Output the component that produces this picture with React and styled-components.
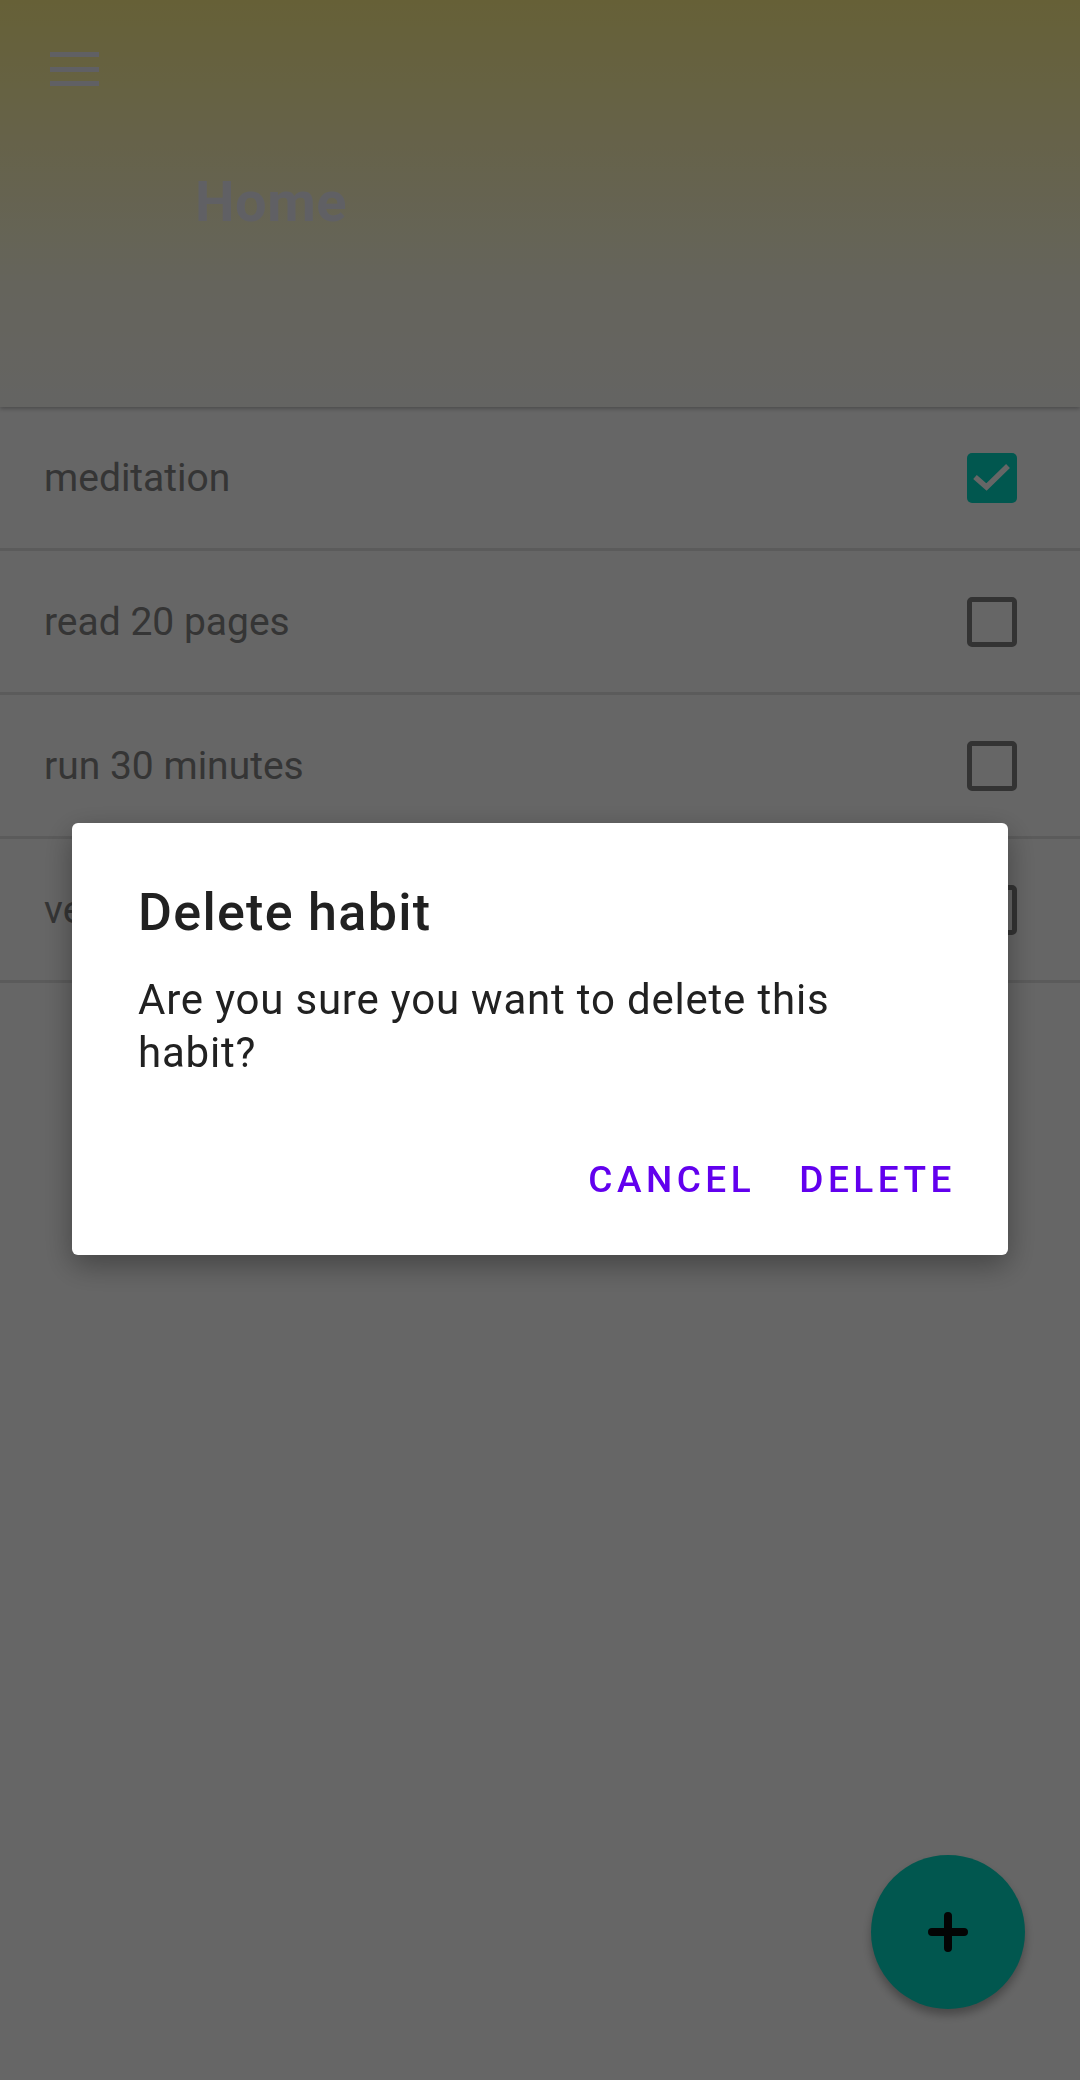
import React from "react";
import styled, { createGlobalStyle } from "styled-components";

const GlobalStyle = createGlobalStyle`
  html, body {
    margin: 0;
    padding: 0;
    background: #ffffff;
    font-family: Roboto, "Liberation Sans", sans-serif;
  }
`;

const Screen = styled.div`
  position: relative;
  min-height: 100vh;
  background: #ffffff;
  overflow: hidden;
`;

const Header = styled.header`
  height: 407px;
  box-sizing: border-box;
  padding: 52px 0 0 50px;
  background: linear-gradient(180deg, #fff18a 0%, #fdfbe6 70%, #fbfbf6 100%);
  box-shadow: 0 2px 4px rgba(0, 0, 0, 0.25);
  position: relative;
  z-index: 1;
`;

const MenuButton = styled.div`
  width: 49px;
  display: flex;
  flex-direction: column;
  gap: 9.5px;

  span {
    display: block;
    height: 5px;
    background: #eff1fa;
  }
`;

const Title = styled.h1`
  margin: 88px 0 0 145px;
  font-size: 56px;
  font-weight: 700;
  line-height: 1;
  color: #eff1fa;
  letter-spacing: 0.5px;
`;

const List = styled.div`
  display: flex;
  flex-direction: column;
`;

const Row = styled.div`
  height: 141px;
  display: flex;
  align-items: center;
  justify-content: space-between;
  padding: 0 63px 0 44px;
  border-bottom: 3px solid #e4e4e4;
`;

const RowLabel = styled.span`
  font-size: 39px;
  color: #848484;
`;

const Box = styled.div`
  width: 50px;
  height: 50px;
  box-sizing: border-box;
  border-radius: 5px;
  display: flex;
  align-items: center;
  justify-content: center;
  background: ${(p) => (p.checked ? "#03dac5" : "transparent")};
  border: ${(p) => (p.checked ? "none" : "5.5px solid #808080")};
`;

const Fab = styled.div`
  position: absolute;
  right: 55px;
  bottom: 71px;
  width: 154px;
  height: 154px;
  border-radius: 50%;
  background: #03dac5;
  display: flex;
  align-items: center;
  justify-content: center;
  box-shadow: 0 6px 10px rgba(0, 0, 0, 0.3);
`;

const Scrim = styled.div`
  position: fixed;
  inset: 0;
  background: rgba(0, 0, 0, 0.6);
  display: flex;
  align-items: center;
  justify-content: center;
  z-index: 5;
`;

const Dialog = styled.div`
  width: 936px;
  box-sizing: border-box;
  margin-top: -3px;
  background: #ffffff;
  border-radius: 6px;
  box-shadow: 0 10px 30px rgba(0, 0, 0, 0.35);
  padding: 59px 0 34px 0;
`;

const DialogTitle = styled.h2`
  margin: 0 66px;
  font-size: 52px;
  font-weight: 500;
  line-height: 61px;
  letter-spacing: 1.3px;
  color: #212121;
`;

const DialogBody = styled.p`
  margin: 30px 66px 0 66px;
  max-width: 740px;
  font-size: 42px;
  line-height: 53px;
  letter-spacing: 0.8px;
  color: #212121;
`;

const Actions = styled.div`
  display: flex;
  justify-content: flex-end;
  gap: 8px;
  margin-top: 59px;
  padding: 0 34px;
`;

const TextButton = styled.button`
  border: none;
  background: none;
  padding: 20px 18px;
  font-family: Roboto, "Liberation Sans", sans-serif;
  font-size: 37px;
  font-weight: 500;
  letter-spacing: 4.5px;
  color: #6200ee;
  text-transform: uppercase;
`;

const habits = [
  { name: "meditation", done: true },
  { name: "read 20 pages", done: false },
  { name: "run 30 minutes", done: false },
  { name: "vegetables", done: false },
];

export default function App() {
  return (
    <>
      <GlobalStyle />
      <Screen>
        <Header>
          <MenuButton>
            <span />
            <span />
            <span />
          </MenuButton>
          <Title>Home</Title>
        </Header>
        <List>
          {habits.map((h) => (
            <Row key={h.name}>
              <RowLabel>{h.name}</RowLabel>
              <Box checked={h.done}>
                {h.done && (
                  <svg width="50" height="50" viewBox="0 0 50 50">
                    <path d="M8 24L19.5 34L41 13" fill="none" stroke="#ffffff" strokeWidth="5.5" />
                  </svg>
                )}
              </Box>
            </Row>
          ))}
        </List>
        <Fab>
          <svg width="40" height="40" viewBox="0 0 40 40">
            <path d="M20 4v32M4 20h32" stroke="#0a0a0a" strokeWidth="8" strokeLinecap="round" />
          </svg>
        </Fab>
        <Scrim>
          <Dialog>
            <DialogTitle>Delete habit</DialogTitle>
            <DialogBody>Are you sure you want to delete this habit?</DialogBody>
            <Actions>
              <TextButton>Cancel</TextButton>
              <TextButton>Delete</TextButton>
            </Actions>
          </Dialog>
        </Scrim>
      </Screen>
    </>
  );
}
